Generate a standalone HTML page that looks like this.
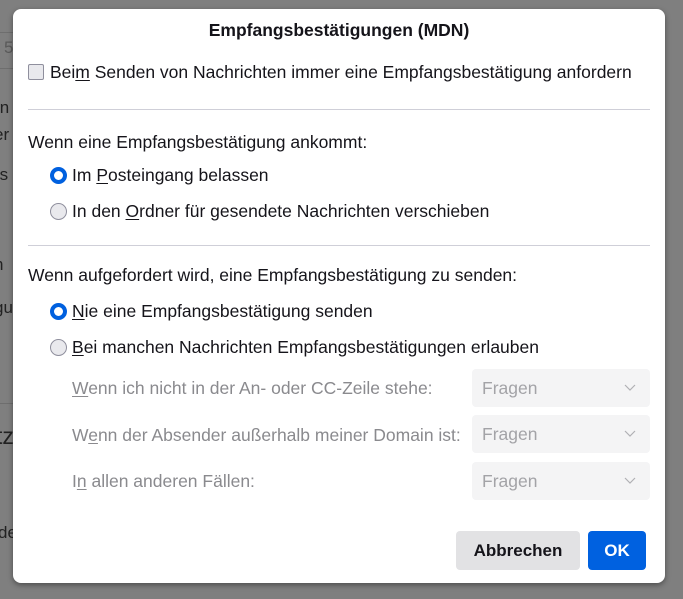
<!DOCTYPE html>
<html><head><meta charset="utf-8"><style>
body{margin:0;width:683px;height:599px;background:#7f7f7f;position:relative;overflow:hidden;font-family:"Liberation Sans",sans-serif;font-size:17.5px;color:#15141a}
.bg{position:absolute;color:#222;font-size:17px}
.dlg{position:absolute;left:13px;top:9px;width:652px;height:574px;background:#fff;border-radius:8px;box-shadow:0 2px 6px rgba(0,0,0,.4)}
.a{position:absolute;white-space:nowrap;line-height:22px}
u{text-decoration:underline;text-underline-offset:2px}
.sep{position:absolute;left:15px;width:622px;height:1px;background:#cfcfd8}
.rad{position:absolute;width:15px;height:15px;border-radius:50%;border:1px solid #8f8f9d;background:#e9e9ed}
.rad.on{width:9px;height:9px;border:4px solid #0060df;background:#fff}
.dis{color:#8a8a8e}
.sel{position:absolute;left:459px;width:178px;height:38px;background:#f4f4f5;border-radius:4px;color:#a3a3a7;font-size:17.5px}
.sel span{position:absolute;left:10px;top:9px}
.sel svg{position:absolute;right:14px;top:15px}
.btn{position:absolute;top:522px;height:39px;border-radius:4px;font-weight:bold;text-align:center;line-height:39px;font-size:17px}
</style></head><body>
<div class="bg" style="left:0;width:40px;height:1px;background:#6e6e6e;top:32px"></div>
<div class="bg" style="left:4px;top:38px;color:#5a5a5a">5</div>
<div class="bg" style="left:0;top:68px;width:40px;height:1px;background:#6e6e6e"></div>
<div class="bg" style="left:-4px;top:98px">in</div>
<div class="bg" style="left:-6px;top:125px">er</div>
<div class="bg" style="left:-6px;top:165px">rs</div>
<div class="bg" style="left:-6px;top:255px">n</div>
<div class="bg" style="left:-6px;top:298px">gu</div>
<div class="bg" style="left:0;top:403px;width:40px;height:1px;background:#6e6e6e"></div>
<div class="bg" style="left:-4px;top:423px;font-size:23px">tz</div>
<div class="bg" style="left:-2px;top:523px">de</div>
<div class="dlg">
<div class="a" style="left:0;width:652px;text-align:center;top:10px;font-weight:bold">Empfangsbestätigungen (MDN)</div>
<div style="position:absolute;left:15px;top:55px;width:14px;height:14px;border:1px solid #8f8f9d;border-radius:2px;background:#e9e9ed"></div>
<div class="a" style="left:37px;top:52px">Bei<u>m</u> Senden von Nachrichten immer eine Empfangsbestätigung anfordern</div>
<div class="sep" style="top:100px"></div>
<div class="a" style="left:15px;top:122px">Wenn eine Empfangsbestätigung ankommt:</div>
<div class="rad on" style="left:37px;top:158px"></div>
<div class="a" style="left:59px;top:155px">Im <u>P</u>osteingang belassen</div>
<div class="rad" style="left:37px;top:194px"></div>
<div class="a" style="left:59px;top:191px">In den <u>O</u>rdner für gesendete Nachrichten verschieben</div>
<div class="sep" style="top:236px"></div>
<div class="a" style="left:15px;top:255px">Wenn aufgefordert wird, eine Empfangsbestätigung zu senden:</div>
<div class="rad on" style="left:37px;top:294px"></div>
<div class="a" style="left:59px;top:291px"><u>N</u>ie eine Empfangsbestätigung senden</div>
<div class="rad" style="left:37px;top:330px"></div>
<div class="a" style="left:59px;top:327px"><u>B</u>ei manchen Nachrichten Empfangsbestätigungen erlauben</div>
<div class="a dis" style="left:59px;top:368px"><u>W</u>enn ich nicht in der An- oder CC-Zeile stehe:</div>
<div class="sel" style="top:360px"><span>Fragen</span><svg width="12" height="8"><path d="M1 1l5 5 5-5" fill="none" stroke="#b0b0b4" stroke-width="1.2"/></svg></div>
<div class="a dis" style="left:59px;top:415px">W<u>e</u>nn der Absender außerhalb meiner Domain ist:</div>
<div class="sel" style="top:406px"><span>Fragen</span><svg width="12" height="8"><path d="M1 1l5 5 5-5" fill="none" stroke="#b0b0b4" stroke-width="1.2"/></svg></div>
<div class="a dis" style="left:59px;top:461px">I<u>n</u> allen anderen Fällen:</div>
<div class="sel" style="top:453px"><span>Fragen</span><svg width="12" height="8"><path d="M1 1l5 5 5-5" fill="none" stroke="#b0b0b4" stroke-width="1.2"/></svg></div>
<div class="btn" style="left:443px;width:124px;background:#e2e2e4;color:#15141a">Abbrechen</div>
<div class="btn" style="left:575px;width:58px;background:#0061e0;color:#fff">OK</div>
</div>
</body></html>
